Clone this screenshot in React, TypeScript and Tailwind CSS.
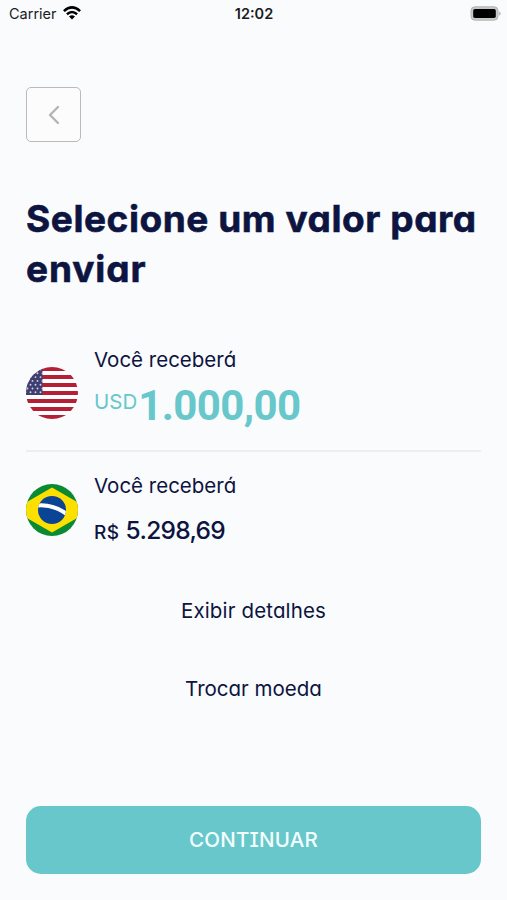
import React from "react";

function UsFlag() {
  const starRows = [0, 1, 2, 3, 4, 5, 6];
  return (
    <svg viewBox="0 0 52 52" className="block size-[52px]">
      <defs>
        <clipPath id="us"><circle cx="26" cy="26" r="26" /></clipPath>
      </defs>
      <g clipPath="url(#us)">
        <rect width="52" height="52" fill="#fff" />
        {starRows.map((i) => (
          <rect key={i} y={i * 8} width="52" height="4" fill="#b71f34" />
        ))}
        <rect width="16.5" height="28" fill="#3f3e70" />
        {starRows.map((r) =>
          [0, 1, 2, 3].map((c) => (
            <circle key={`${r}-${c}`} cx={c * 5 + (r % 2 ? 0.5 : -1.5) + 1} cy={r * 3.8 + 2.5} r="0.95" fill="#d5d5e5" />
          ))
        )}
      </g>
    </svg>
  );
}

function BrFlag() {
  return (
    <svg viewBox="0 0 52 52" className="block size-[52px]">
      <defs>
        <clipPath id="br"><circle cx="26" cy="26" r="26" /></clipPath>
        <clipPath id="globe"><circle cx="26" cy="26" r="14" /></clipPath>
      </defs>
      <g clipPath="url(#br)">
        <rect width="52" height="52" fill="#0b8a34" />
        <path d="M26 3.500 65 26 26 48.500 -13 26Z" fill="#fee000" />
        <circle cx="26" cy="26" r="14" fill="#0a4595" />
        <path clipPath="url(#globe)" d="M10 21.700Q27 19.500 42 31" fill="none" stroke="#fff" strokeWidth="4" />
      </g>
    </svg>
  );
}

function StatusBar() {
  return (
    <div className="grid h-7 grid-cols-3 items-center pr-[6px] pl-[9px] text-[#1c1c1e]">
      <div className="flex items-center gap-[6px]">
        <span className="text-[14.5px] leading-7">Carrier</span>
        <svg viewBox="0 0 18 14" className="-mt-[2px] h-[14px] w-[18px]" fill="none" stroke="#000" strokeWidth="2.500">
          <path d="M.9 5.200Q9-2.400 17.100 5.200" />
          <path d="M3.900 8.300Q9 3.800 14.100 8.300" />
          <path d="M6 10.400Q9 8 12 10.400L9 13.400Z" fill="#000" stroke="none" />
        </svg>
      </div>
      <span className="-ml-[2px] text-center text-[14.5px] leading-7 font-semibold">12:02</span>
      <svg viewBox="0 0 31 15" className="-mt-[2px] h-[15px] w-[31px] justify-self-end">
        <rect x="1" y=".8" width="27" height="13.400" rx="3.800" fill="#c8c8c8" stroke="#b4b4b4" />
        <rect x="3.200" y="3" width="22.600" height="9" rx="1.800" fill="#000" />
        <path d="M29.200 5.200Q32 7.500 29.200 9.800Z" fill="#aaa" />
      </svg>
    </div>
  );
}

export default function App() {
  return (
    <div className="flex h-[900px] w-[507px] flex-col overflow-hidden bg-[#f9fbfd] font-['Inter',sans-serif] text-[#0d1440]">
      <StatusBar />
      <main className="flex flex-1 flex-col px-[26px] pb-[26px] [font-feature-settings:'cv11','cv08']">
        <button className="mt-[59px] flex size-[55px] items-center justify-center rounded-[5px] border-[1.500px] border-[#b9babd] bg-[#fcfcfd]">
          <svg viewBox="0 0 12 20" className="h-5 w-3" fill="none" stroke="#b4b4b6" strokeWidth="2.400" strokeLinecap="round" strokeLinejoin="round">
            <path d="M10 2 2 10l8 8" />
          </svg>
        </button>

        <h1 className="mt-[52px] text-[37px] leading-[50px] font-bold tracking-[0.56px] whitespace-nowrap [-webkit-text-stroke:0.6px_#0d1440]">
          Selecione um valor para
          <br />
          <span className="tracking-[0.9px]">enviar</span>
        </h1>

        <section className="mt-[51px] flex h-[107px] border-b-2 border-[#eceef0]">
          <div className="mt-[22px]"><UsFlag /></div>
          <div className="ml-4">
            <p className="text-[20.500px] leading-[30px]">Você receberá</p>
            <div className="flex text-[#67c7ca]">
              <span className="mt-[15px] text-[20.500px] leading-6">USD</span>
              <span className="mt-[6px] ml-px font-['Roboto',sans-serif] text-[42px] leading-[50px] font-bold tracking-[-0.6px]">1.000,00</span>
            </div>
          </div>
        </section>

        <section className="mt-[19px] flex h-[76px]">
          <div className="mt-[13px]"><BrFlag /></div>
          <div className="ml-4">
            <p className="text-[20.500px] leading-[30px]">Você receberá</p>
            <div className="mt-[14px] flex items-baseline gap-[6px] leading-[30px]">
              <span className="text-[19px] font-medium tracking-[0.5px]">R$</span>
              <span className="text-[24.500px] font-medium tracking-[-0.7px]">5.298,69</span>
            </div>
          </div>
        </section>

        <div className="mt-[49px] flex flex-col items-center gap-12 text-[20.500px] leading-[30px]">
          <button className="tracking-[0.150px]">Exibir detalhes</button>
          <button>Trocar moeda</button>
        </div>

        <button className="mt-auto h-[68px] rounded-[15px] bg-[#67c7ca] text-[20.500px] font-medium tracking-[0.200px] text-[#f3ffff]">CONTINUAR</button>
      </main>
    </div>
  );
}
